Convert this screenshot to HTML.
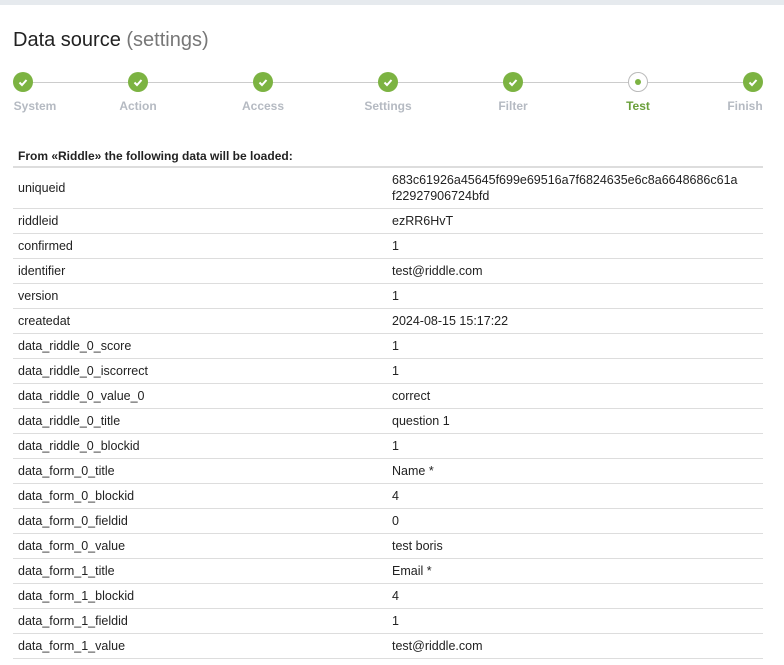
<!DOCTYPE html>
<html><head><style>
body{margin:0;width:784px;height:665px;overflow:hidden;background:#fff;font-family:"Liberation Sans",Arial,sans-serif;color:#222;}
.top{height:5px;background:#e6eaee;}
h1{position:absolute;left:13px;top:29px;margin:0;font-weight:normal;font-size:20px;color:#222;}
h1 span{color:#777;}
.line{position:absolute;left:23px;width:730px;top:82px;height:1px;background:#ccc;}
.c{position:absolute;top:72px;width:20px;height:20px;border-radius:50%;background:#7cb342;margin-left:-10px;}
.c svg{position:absolute;left:4px;top:4px;}
.c.t{background:#fff;border:1px solid #bbb;width:18px;height:18px;}
.c.t:after{content:"";position:absolute;left:6px;top:6px;width:6px;height:6px;border-radius:50%;background:#7cb342;}
.l{position:absolute;top:99px;font-size:12px;font-weight:bold;color:#b5bac2;transform:translateX(-50%);}
table{position:absolute;left:13px;top:145px;width:750px;border-collapse:collapse;font-size:12.5px;}
th{text-align:left;font-size:12px;padding:0 5px;height:21px;border-bottom:2px solid #ddd;}
td{padding:0 5px;height:24px;border-bottom:1px solid #ddd;vertical-align:middle;}
td:first-child{width:364px;}
</style></head><body>
<div class="top"></div>
<h1>Data source <span>(settings)</span></h1>
<div class="line"></div>
<div class="c" style="left:23px"><svg width="12" height="12"><path d="M2.5 6.5l2.5 2.5 4.5-5" stroke="#fff" stroke-width="2" fill="none"/></svg></div>
<div class="c" style="left:138px"><svg width="12" height="12"><path d="M2.5 6.5l2.5 2.5 4.5-5" stroke="#fff" stroke-width="2" fill="none"/></svg></div>
<div class="c" style="left:263px"><svg width="12" height="12"><path d="M2.5 6.5l2.5 2.5 4.5-5" stroke="#fff" stroke-width="2" fill="none"/></svg></div>
<div class="c" style="left:388px"><svg width="12" height="12"><path d="M2.5 6.5l2.5 2.5 4.5-5" stroke="#fff" stroke-width="2" fill="none"/></svg></div>
<div class="c" style="left:513px"><svg width="12" height="12"><path d="M2.5 6.5l2.5 2.5 4.5-5" stroke="#fff" stroke-width="2" fill="none"/></svg></div>
<div class="c t" style="left:638px"></div>
<div class="c" style="left:753px"><svg width="12" height="12"><path d="M2.5 6.5l2.5 2.5 4.5-5" stroke="#fff" stroke-width="2" fill="none"/></svg></div>
<div class="l" style="left:35px">System</div>
<div class="l" style="left:138px">Action</div>
<div class="l" style="left:263px">Access</div>
<div class="l" style="left:388px">Settings</div>
<div class="l" style="left:513px">Filter</div>
<div class="l" style="left:638px;color:#6a9f3a">Test</div>
<div class="l" style="left:745px">Finish</div>
<table>
<tr><th colspan="2">From «Riddle» the following data will be loaded:</th></tr>
<tr><td style="height:40px">uniqueid</td><td style="line-height:16px">683c61926a45645f699e69516a7f6824635e6c8a6648686c61a<br>f22927906724bfd</td></tr>
<tr><td>riddleid</td><td>ezRR6HvT</td></tr>
<tr><td>confirmed</td><td>1</td></tr>
<tr><td>identifier</td><td>test@riddle.com</td></tr>
<tr><td>version</td><td>1</td></tr>
<tr><td>createdat</td><td>2024-08-15 15:17:22</td></tr>
<tr><td>data_riddle_0_score</td><td>1</td></tr>
<tr><td>data_riddle_0_iscorrect</td><td>1</td></tr>
<tr><td>data_riddle_0_value_0</td><td>correct</td></tr>
<tr><td>data_riddle_0_title</td><td>question 1</td></tr>
<tr><td>data_riddle_0_blockid</td><td>1</td></tr>
<tr><td>data_form_0_title</td><td>Name *</td></tr>
<tr><td>data_form_0_blockid</td><td>4</td></tr>
<tr><td>data_form_0_fieldid</td><td>0</td></tr>
<tr><td>data_form_0_value</td><td>test boris</td></tr>
<tr><td>data_form_1_title</td><td>Email *</td></tr>
<tr><td>data_form_1_blockid</td><td>4</td></tr>
<tr><td>data_form_1_fieldid</td><td>1</td></tr>
<tr><td>data_form_1_value</td><td>test@riddle.com</td></tr>
</table>
</body></html>
